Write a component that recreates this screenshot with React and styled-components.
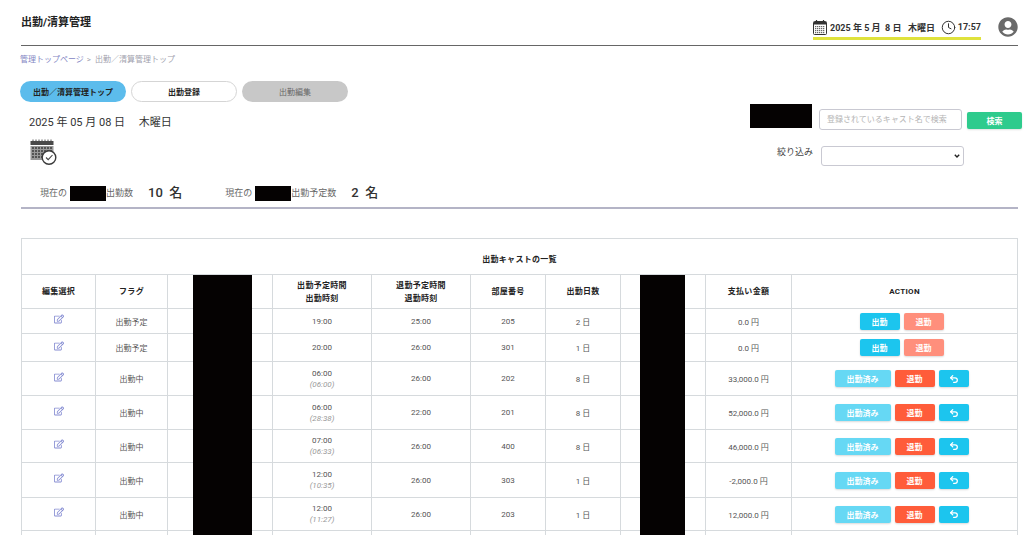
import React from "react";
import styled, { createGlobalStyle } from "styled-components";
import { FaRegEdit, FaUserCircle } from "react-icons/fa";
import { LuUndo2, LuClock } from "react-icons/lu";

const GlobalStyle = createGlobalStyle`
  html, body {
    margin: 0;
    height: 535px;
    overflow: hidden;
    background: #fff;
    font-family: Roboto, "Noto Sans CJK JP", sans-serif;
    color: #444;
  }
  * { box-sizing: border-box; }
`;

const Page = styled.div`
  width: 1024px;
  height: 535px;
  overflow: hidden;
  padding: 0 6px 0 20px;
`;

const Header = styled.header`
  height: 46px;
  margin-left: 1px;
  border-bottom: 1px solid #666;
  display: flex;
  align-items: flex-start;
  justify-content: space-between;
`;

const Title = styled.h1`
  margin: 16px 0 0;
  font-size: 11px;
  line-height: 14px;
  font-weight: 700;
  color: #222;
`;

const HeaderRight = styled.div`
  display: flex;
  align-items: flex-start;
  gap: 17px;
`;

const Clock = styled.div`
  margin-top: 18px;
  width: 168px;
  height: 22px;
  padding-bottom: 1px;
  border-bottom: 3px solid #dfe23c;
  display: flex;
  align-items: center;
  font-size: 9px;
  font-weight: 700;
  color: #333;
  white-space: pre;
  svg { flex: none; }
`;

const ClockDate = styled.span`
  margin: 0 4px 0 3px;
  flex: 1;
`;

const ClockTime = styled.span`
  margin-left: 2px;
`;

const Avatar = styled(FaUserCircle)`
  margin-top: 17px;
  color: #6a6a6a;
`;

const Crumbs = styled.nav`
  margin-top: 8px;
  font-size: 8px;
  line-height: 11px;
  color: #a2a2ae;
  a { color: #8486c4; }
  i { margin: 0 4px 0 3px; font-style: normal; }
`;

const Tabs = styled.div`
  margin-top: 16px;
  display: flex;
  gap: 5px;
`;

const Tab = styled.button`
  width: 106px;
  height: 21px;
  padding: 0;
  border-radius: 11px;
  border: 1px solid ${p => (p.$kind === "plain" ? "#d5d5d5" : "transparent")};
  background: ${p => ({ active: "#5cbcec", plain: "#fff", off: "#c8c8c8" }[p.$kind])};
  color: ${p => (p.$kind === "off" ? "#666" : "#222")};
  font: ${p => (p.$kind === "off" ? 400 : 700)} 8px Roboto, "Noto Sans CJK JP", sans-serif;
`;

const Summary = styled.section`
  height: 107px;
  border-bottom: 2px solid #b4b4c6;
  margin-left: 1px;
  display: flex;
  justify-content: space-between;
`;

const SummaryLeft = styled.div`
  display: flex;
  flex-direction: column;
`;

const TodayLabel = styled.div`
  margin: 13px 0 0 8px;
  font-size: 11px;
  line-height: 16px;
  color: #333;
  white-space: pre;
`;

const CalendarIcon = styled.svg`
  display: block;
  margin: 8px 0 0 9px;
`;

const Stats = styled.div`
  margin: 20px 0 0 19px;
  display: flex;
  gap: 43px;
`;

const Stat = styled.div`
  display: flex;
  align-items: center;
  font-size: 9px;
  line-height: 16px;
  color: #666;
`;

const Mask = styled.span`
  display: inline-block;
  width: 36px;
  height: 15px;
  margin-left: 3px;
  background: #050202;
`;

const StatValue = styled.strong`
  margin-left: 15px;
  font-size: 13px;
  font-weight: 500;
  color: #333;
  white-space: pre;
`;

const SummaryRight = styled.div`
  width: 272px;
  margin: 2px -4px 0 0;
  display: flex;
  flex-direction: column;
`;

const SearchRow = styled.div`
  display: flex;
  align-items: flex-start;
`;

const SearchMask = styled.div`
  width: 62px;
  height: 24px;
  background: #050202;
`;

const SearchInput = styled.input`
  margin: 5px 0 0 7px;
  width: 143px;
  height: 21px;
  padding: 0 7px;
  border: 1px solid #c9c9d2;
  border-radius: 3px;
  font: 8px Roboto, "Noto Sans CJK JP", sans-serif;
  &::placeholder { color: #b4b4b4; }
`;

const SearchButton = styled.button`
  margin: 8px 0 0 5px;
  width: 55px;
  height: 17px;
  padding: 0;
  border: none;
  border-radius: 2px;
  background: #2ecb8d;
  color: #fff;
  font: 700 8px Roboto, "Noto Sans CJK JP", sans-serif;
  box-shadow: 0 1px 2px rgba(0, 0, 0, 0.12);
`;

const FilterRow = styled.label`
  margin: 16px 0 0 27px;
  display: flex;
  align-items: flex-start;
  gap: 8px;
  font-size: 9px;
  line-height: 13px;
  color: #444;
`;

const FilterSelect = styled.select`
  width: 143px;
  height: 20px;
  border: 1px solid #c9c9d2;
  border-radius: 3px;
  appearance: none;
  background: #fff url("data:image/svg+xml,%3Csvg xmlns='http://www.w3.org/2000/svg' width='6' height='4'%3E%3Cpath d='M.8.8 3 3l2.2-2.2' fill='none' stroke='%23222' stroke-width='1.4'/%3E%3C/svg%3E") no-repeat right 3px center;
`;

const TableWrap = styled.div`
  position: relative;
  margin: 29px 0 0 1px;
  width: 996px;
`;

const ListTable = styled.table`
  width: 100%;
  table-layout: fixed;
  border-collapse: collapse;
  font-size: 8px;
  color: #555;
  th, td {
    border: 1px solid #d6dadd;
    padding: 0;
    text-align: center;
    vertical-align: middle;
  }
  th {
    color: #222;
    font-weight: 700;
    letter-spacing: 0.3px;
    line-height: 13px;
  }
`;

const Row = styled.tr`
  height: ${p => p.$h}px;
`;

const CaptionCell = styled.th`
  padding-top: 5px !important;
`;

const EditIcon = styled(FaRegEdit)`
  color: #858cd2;
  position: relative;
  top: -1px;
`;

const Sub = styled.div`
  margin-top: 2px;
  font-style: italic;
  color: #999;
`;

const Actions = styled.div`
  display: flex;
  justify-content: center;
  gap: 4px;
  padding-right: 6px;
`;

const ActionButton = styled.button`
  width: ${p => p.$w || 40}px;
  height: 17px;
  padding: 0;
  border: none;
  border-radius: 2px;
  background: ${p => p.$bg};
  color: #fff;
  font: 700 8px Roboto, "Noto Sans CJK JP", sans-serif;
  box-shadow: 0 1px 2px rgba(0, 0, 0, 0.15);
  display: flex;
  align-items: center;
  justify-content: center;
`;

const BlackOut = styled.div`
  position: absolute;
  top: 37px;
  bottom: 0;
  left: ${p => p.$left}px;
  width: ${p => p.$w}px;
  background: #050202;
`;

const colWidths = [74, 72, 105, 99, 99, 75, 75, 85, 86, 226];

const planned = [
  { flag: "出勤予定", start: "19:00", end: "25:00", room: "205", days: "2 日", pay: "0.0 円" },
  { flag: "出勤予定", start: "20:00", end: "26:00", room: "301", days: "1 日", pay: "0.0 円" },
];

const working = [
  { start: "06:00", real: "(06:00)", end: "26:00", room: "202", days: "8 日", pay: "33,000.0 円" },
  { start: "06:00", real: "(28:38)", end: "22:00", room: "201", days: "8 日", pay: "52,000.0 円" },
  { start: "07:00", real: "(06:33)", end: "26:00", room: "400", days: "8 日", pay: "46,000.0 円" },
  { start: "12:00", real: "(10:35)", end: "26:00", room: "303", days: "1 日", pay: "-2,000.0 円" },
  { start: "12:00", real: "(11:27)", end: "26:00", room: "203", days: "1 日", pay: "12,000.0 円" },
];

const workingHeights = [34, 34, 33, 35, 33];

const SmallCalendar = () => (
  <svg width="14" height="16" viewBox="0 0 14 16">
    <rect x="0.5" y="2.5" width="13" height="13" rx="1" fill="#fff" stroke="#333" />
    <rect x="1" y="3" width="12" height="2.5" fill="#333" />
    <path d="M3.5 1v3M10.5 1v3" stroke="#333" strokeWidth="1.2" />
    {[7, 9, 11, 13].map(y =>
      [2, 4, 6, 8, 10].map(x => (
        <rect key={`${x}-${y}`} x={x} y={y} width="1.3" height="1.2" fill="#666" />
      ))
    )}
  </svg>
);

const BigCalendar = () => (
  <CalendarIcon width="27" height="26" viewBox="0 0 27 26">
    <path d="M3 0.5v2M6 0.5v2M9 0.5v2M12 0.5v2M15 0.5v2M18 0.5v2M21 0.5v2" stroke="#555" />
    <rect x="0.5" y="2" width="23" height="4" fill="#4a4a4a" />
    <rect x="0.5" y="7" width="23" height="14" fill="#9a9a9a" />
    {[8, 11, 14, 17].map(y =>
      [2, 5, 8, 11, 14, 17, 20].map(x => (
        <rect key={`${x}-${y}`} x={x} y={y} width="2" height="2" fill="#555" />
      ))
    )}
    <circle cx="19" cy="18.5" r="6.8" fill="#fff" stroke="#3a3a3a" strokeWidth="1.4" />
    <path d="M16 18.5l2.2 2.2L22.5 16" fill="none" stroke="#444" strokeWidth="1.1" />
  </CalendarIcon>
);

const App = () => (
  <>
    <GlobalStyle />
    <Page>
      <Header>
        <Title>出勤/清算管理</Title>
        <HeaderRight>
          <Clock>
            <SmallCalendar />
            <ClockDate>2025 年 5 月  8 日   木曜日</ClockDate>
            <LuClock size={15} strokeWidth={1.6} />
            <ClockTime>17:57</ClockTime>
          </Clock>
          <Avatar size={20} />
        </HeaderRight>
      </Header>

      <Crumbs><a>管理トップページ</a><i>&gt;</i>出勤／清算管理トップ</Crumbs>

      <Tabs>
        <Tab $kind="active">出勤／清算管理トップ</Tab>
        <Tab $kind="plain">出勤登録</Tab>
        <Tab $kind="off">出勤編集</Tab>
      </Tabs>

      <Summary>
        <SummaryLeft>
          <TodayLabel>2025 年 05 月 08 日　 木曜日</TodayLabel>
          <BigCalendar />
          <Stats>
            <Stat>現在の<Mask />出勤数<StatValue>10  名</StatValue></Stat>
            <Stat>現在の<Mask />出勤予定数<StatValue>2  名</StatValue></Stat>
          </Stats>
        </SummaryLeft>
        <SummaryRight>
          <SearchRow>
            <SearchMask />
            <SearchInput placeholder="登録されているキャスト名で検索" />
            <SearchButton>検索</SearchButton>
          </SearchRow>
          <FilterRow>
            絞り込み
            <FilterSelect />
          </FilterRow>
        </SummaryRight>
      </Summary>

      <TableWrap>
        <ListTable>
          <colgroup>
            {colWidths.map((w, i) => <col key={i} style={{ width: w }} />)}
          </colgroup>
          <thead>
            <Row $h={36}><CaptionCell colSpan={10}>出勤キャストの一覧</CaptionCell></Row>
            <Row $h={34}>
              <th>編集選択</th>
              <th>フラグ</th>
              <th />
              <th>出勤予定時間<br />出勤時刻</th>
              <th>退勤予定時間<br />退勤時刻</th>
              <th>部屋番号</th>
              <th>出勤日数</th>
              <th />
              <th>支払い金額</th>
              <th>ACTION</th>
            </Row>
          </thead>
          <tbody>
            {planned.map((r, i) => (
              <Row $h={i === 0 ? 25 : 28} key={r.room}>
                <td><EditIcon size={10} /></td>
                <td>{r.flag}</td>
                <td />
                <td>{r.start}</td>
                <td>{r.end}</td>
                <td>{r.room}</td>
                <td>{r.days}</td>
                <td />
                <td>{r.pay}</td>
                <td>
                  <Actions>
                    <ActionButton $bg="#1cc5ee">出勤</ActionButton>
                    <ActionButton $bg="#ff8f7c">退勤</ActionButton>
                  </Actions>
                </td>
              </Row>
            ))}
            {working.map((r, i) => (
              <Row $h={workingHeights[i]} key={r.room}>
                <td><EditIcon size={10} /></td>
                <td>出勤中</td>
                <td />
                <td>{r.start}<Sub>{r.real}</Sub></td>
                <td>{r.end}</td>
                <td>{r.room}</td>
                <td>{r.days}</td>
                <td />
                <td>{r.pay}</td>
                <td>
                  <Actions>
                    <ActionButton $bg="#66d8f4" $w={56}>出勤済み</ActionButton>
                    <ActionButton $bg="#ff5c3a">退勤</ActionButton>
                    <ActionButton $bg="#1cc5ee" $w={30}><LuUndo2 size={10} strokeWidth={3} /></ActionButton>
                  </Actions>
                </td>
              </Row>
            ))}
            <Row $h={34}>
              {colWidths.map((w, i) => <td key={i} />)}
            </Row>
          </tbody>
        </ListTable>
        <BlackOut $left={172} $w={59} />
        <BlackOut $left={619} $w={45} />
      </TableWrap>
    </Page>
  </>
);

export default App;
